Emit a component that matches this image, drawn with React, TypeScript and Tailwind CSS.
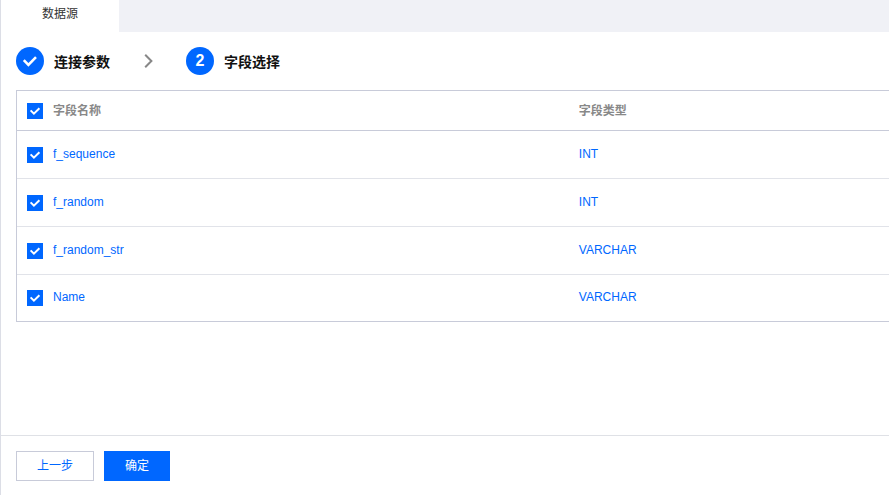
import React, { useState } from "react";

const fields = [
  { name: "f_sequence", type: "INT" },
  { name: "f_random", type: "INT" },
  { name: "f_random_str", type: "VARCHAR" },
  { name: "Name", type: "VARCHAR" },
];

type CheckboxProps = {
  id: string;
  checked: boolean;
  onChange: () => void;
};

const Checkbox = ({ id, checked, onChange }: CheckboxProps) => (
  <span className="grid size-4">
    <input
      id={id}
      type="checkbox"
      checked={checked}
      onChange={onChange}
      className="col-start-1 row-start-1 size-4 cursor-pointer appearance-none border border-[#c8cbd9] bg-white checked:border-[#0067ff] checked:bg-[#0067ff]"
    />
    {checked && (
      <svg
        className="pointer-events-none col-start-1 row-start-1 size-4"
        viewBox="0 0 16 16"
        fill="none"
        stroke="white"
        strokeWidth="2"
        aria-hidden="true">
        <path d="M3.6 7.4 6.9 10.7 12.4 5.2" />
      </svg>
    )}
  </span>
);

const Steps = () => (
  <ol className="flex items-center px-[15px] pt-[15px] text-sm font-bold text-[#111111]">
    <li className="flex items-center gap-[10px]">
      <span className="flex size-7 items-center justify-center rounded-full bg-[#0067ff]">
        <svg
          className="size-4"
          viewBox="0 0 16 16"
          fill="none"
          stroke="white"
          strokeWidth="2.6"
          aria-hidden="true">
          <path d="M1.8 7.2 6.4 11.8 14 4.2" />
        </svg>
      </span>
      <span className="pt-0.5">连接参数</span>
    </li>
    <li className="px-8" aria-hidden="true">
      <svg
        className="h-4 w-3"
        viewBox="0 0 12 16"
        fill="none"
        stroke="#888888"
        strokeWidth="2">
        <path d="M3.2 1.8 9.4 8 3.2 14.2" />
      </svg>
    </li>
    <li className="flex items-center gap-[10px]" aria-current="step">
      <span className="flex size-7 items-center justify-center rounded-full bg-[#0067ff] text-base text-white">
        2
      </span>
      <span className="pt-0.5">字段选择</span>
    </li>
  </ol>
);

const FieldTable = () => {
  const [selected, setSelected] = useState(fields.map((field) => field.name));
  const allSelected = selected.length === fields.length;

  const toggle = (name: string) =>
    setSelected(
      selected.includes(name)
        ? selected.filter((item) => item !== name)
        : [...selected, name],
    );

  return (
    <div className="mt-[15px] ml-[15px] border border-r-0 border-[#c8cbd9]">
      <table className="w-full table-fixed border-separate border-spacing-0 text-left">
        <thead className="text-[#888888]">
          <tr className="h-10">
            <th className="w-[26px] border-b border-[#c8cbd9] pl-[10px]">
              <Checkbox
                id="field-all"
                checked={allSelected}
                onChange={() =>
                  setSelected(allSelected ? [] : fields.map((field) => field.name))
                }
              />
            </th>
            <th className="w-[60.3%] border-b border-[#c8cbd9] pl-[10px] font-bold">
              <label htmlFor="field-all">字段名称</label>
            </th>
            <th className="border-b border-[#c8cbd9] pl-[10px] font-bold">字段类型</th>
          </tr>
        </thead>
        <tbody className="text-[#0067ff]">
          {fields.map((field) => (
            <tr
              key={field.name}
              className="h-12 last:h-[46px] [&>td]:border-b [&>td]:border-[#e1e3e9] last:[&>td]:border-b-0">
              <td className="pl-[10px]">
                <Checkbox
                  id={field.name}
                  checked={selected.includes(field.name)}
                  onChange={() => toggle(field.name)}
                />
              </td>
              <td className="pb-0.5 pl-[10px]">
                <label htmlFor={field.name}>{field.name}</label>
              </td>
              <td className="pb-0.5 pl-[10px]">{field.type}</td>
            </tr>
          ))}
        </tbody>
      </table>
    </div>
  );
};

export default function App() {
  return (
    <div className="flex min-h-screen flex-col border-l border-[#dcdee6] bg-white font-['Liberation_Sans','Noto_Sans_CJK_SC',sans-serif] text-xs">
      {/* Tabs */}
      <nav className="flex h-8 bg-[#f0f1f6]">
        <button type="button" className="w-[118px] bg-white pb-1 text-[#333333]">
          数据源
        </button>
      </nav>
      <main className="flex-1">
        <Steps />
        <FieldTable />
      </main>
      {/* Actions */}
      <footer className="flex gap-[10px] border-t border-[#dfe1e6] px-[15px] pt-[15px] pb-[14px]">
        <button
          type="button"
          className="h-[30px] border border-[#c8cbd9] bg-white px-5 text-[#0067ff]">
          上一步
        </button>
        <button type="button" className="h-[30px] bg-[#0067ff] px-[21px] text-white">
          确定
        </button>
      </footer>
    </div>
  );
}
